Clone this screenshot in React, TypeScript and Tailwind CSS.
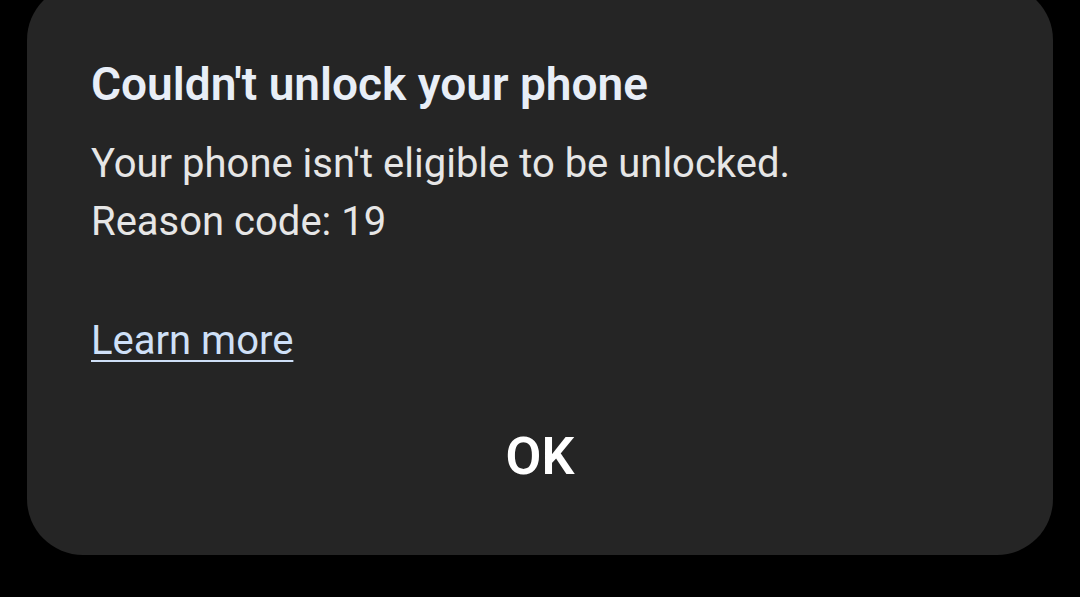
export default function App() {
  return (
    <div className="w-[1080px] h-[597px] bg-black overflow-hidden font-['Roboto',sans-serif]">
      <div className="mx-[27px] -mt-4 rounded-[56px] bg-[#252525] pl-16 pr-16 pt-[73px] pb-[68px]">
        <h2 className="text-[46px] leading-[54px] font-semibold text-[#e8eef7]">
          Couldn't unlock your phone
        </h2>
        <div className="mt-[24px] text-[40px] leading-[58px] text-[#e6e6e6]">
          <p>Your phone isn't eligible to be unlocked.</p>
          <p>Reason code: 19</p>
        </div>
        <a className="block mt-[61px] w-fit text-[40px] leading-[58px] text-[#cfe0f7] underline underline-offset-[6px] decoration-2">
          Learn more
        </a>
        <div className="mt-[57px] flex justify-center">
          <button className="text-[52px] leading-[60px] font-semibold text-white">OK</button>
        </div>
      </div>
    </div>
  );
}
